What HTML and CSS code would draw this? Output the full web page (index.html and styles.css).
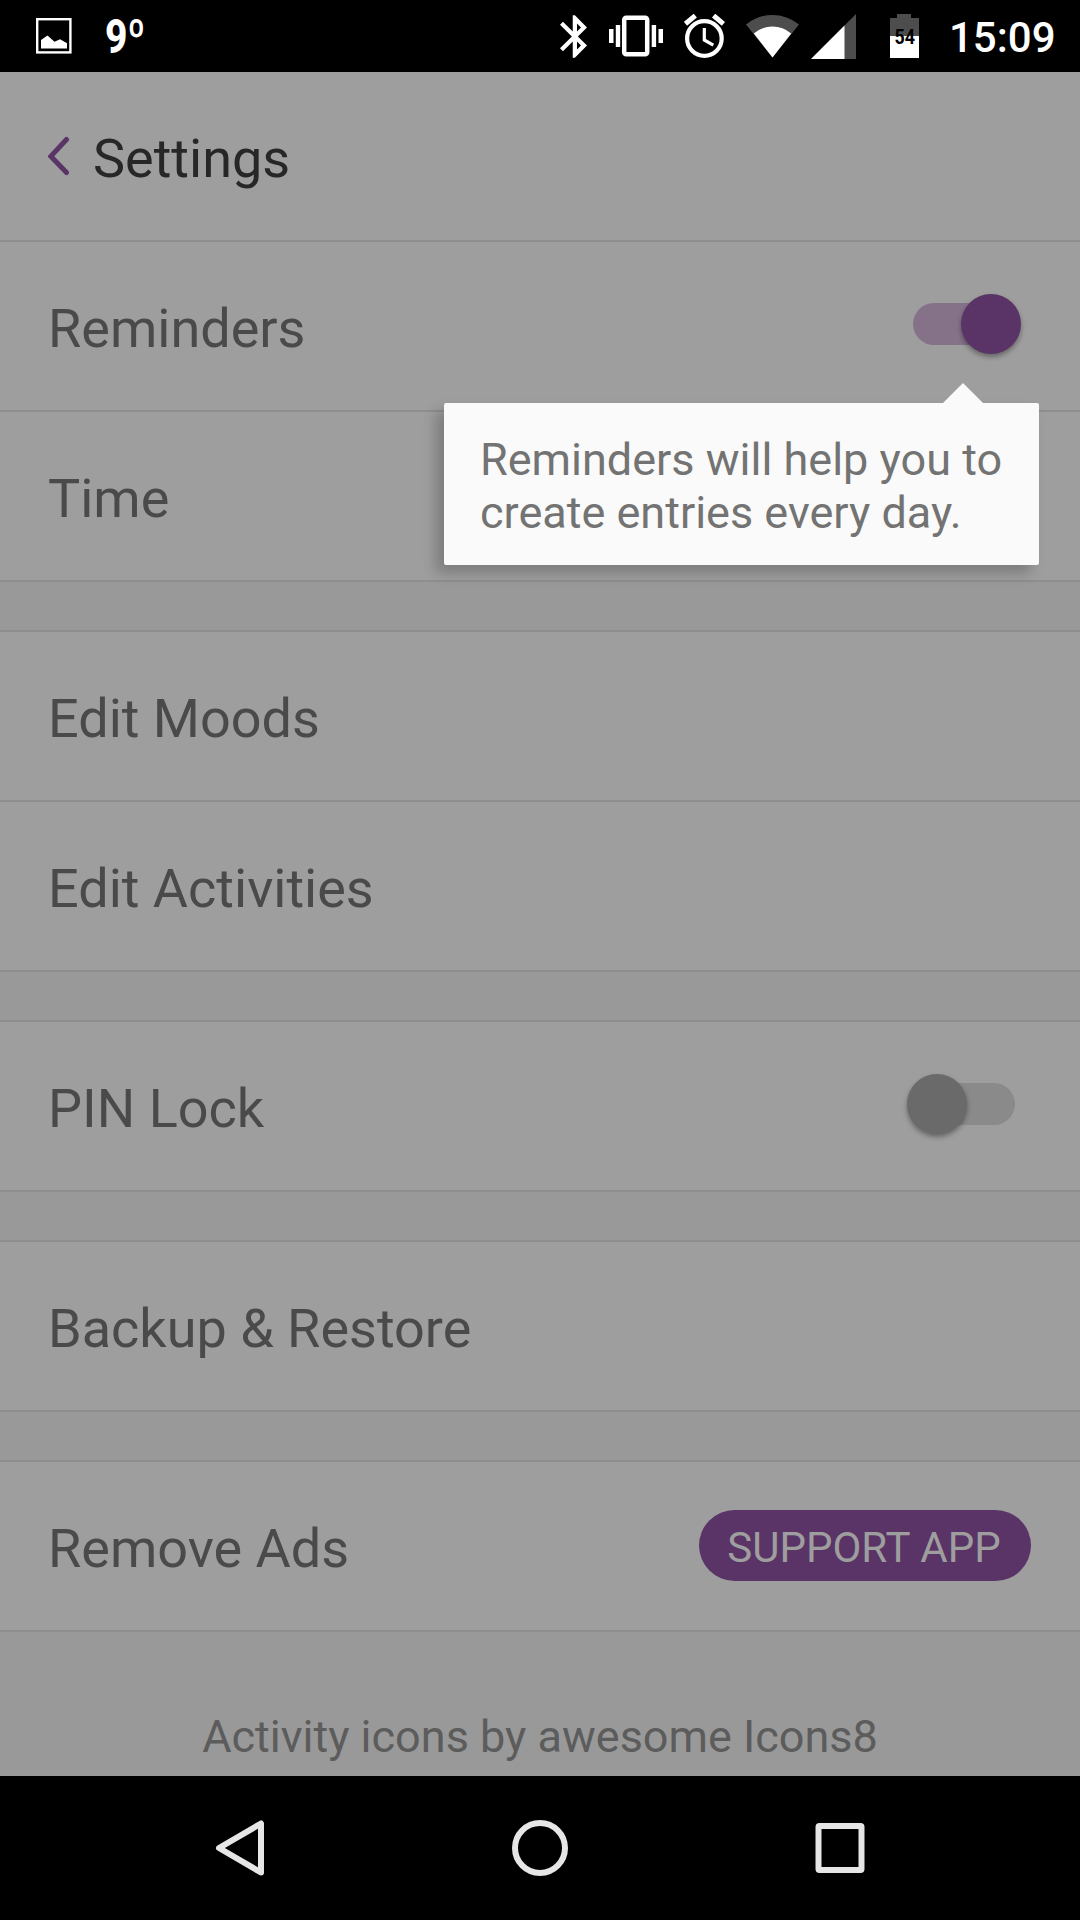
FILE: index.html
```html
<!DOCTYPE html>
<html lang="en">

<head>
    <meta charset="UTF-8">
    <meta name="viewport" content="width=device-width, initial-scale=1.0">
    <title>Settings</title>
    <link rel="stylesheet" href="styles.css">
</head>

<body>
    <div class="status-bar">
        <svg class="icon-picture" width="36" height="36" viewBox="0 0 36 36">
            <rect x="1.2" y="1.2" width="33.2" height="33.2" fill="none" stroke="#fff" stroke-width="2.4" />
            <path d="M5 30.500V22l6.500-4.500 7 6.300 5.500-2.600 7 4v5.300z" fill="#fff" />
        </svg>
        <span class="temperature">9º</span>
        <svg class="icon-bluetooth" width="27" height="43" viewBox="5 2 12.710 20">
            <path d="M17.710 7.710L12 2h-1v7.590L6.410 5 5 6.410 10.590 12 5 17.590 6.410 19 11 14.410V22h1l5.710-5.710-4.300-4.290 4.300-4.290zM13 5.830l1.880 1.880L13 9.590V5.830zm1.880 10.460L13 18.170v-3.760l1.880 1.880z" fill="#fff" />
        </svg>
        <svg class="icon-vibrate" width="54" height="42" viewBox="0 0 54 42">
            <rect x="15.200" y="2.700" width="23" height="36.500" rx="2" fill="none" stroke="#fff" stroke-width="4.500" />
            <path d="M0 14h4.500v14H0zM6.800 10h4.400v22H6.800zM42.700 10h4.400v22h-4.400zM49.500 14H54v14h-4.500z" fill="#fff" />
        </svg>
        <svg class="icon-alarm" width="42" height="44" viewBox="0 0 42 44">
            <g fill="none" stroke="#fff">
                <circle cx="20.400" cy="24.500" r="17.300" stroke-width="4.200" />
                <path d="M1.500 9.800l9.800-8.200M29.600 1.600l9.800 8.200" stroke-width="5" />
                <path d="M20.300 14v12l9 5.200" stroke-width="3.200" />
            </g>
        </svg>
        <svg class="icon-wifi" width="53" height="43" viewBox="0 0 53 43">
            <path d="M26.500 42.500L0 9.500Q12 0 26.500 0T53 9.500z" fill="#4d4d4d" />
            <path d="M26.500 42.500L7.800 18.500Q16 11.500 26.500 11.500T45.200 18.500z" fill="#fff" />
        </svg>
        <svg class="icon-signal" width="45" height="45" viewBox="0 0 45 45">
            <path d="M0 45L45 0v45z" fill="#4d4d4d" />
            <path d="M0 45L33.500 11.500V45z" fill="#fff" />
        </svg>
        <svg class="icon-battery" width="29" height="44" viewBox="0 0 29 44">
            <path d="M0 4h7V0h14v4h8v18H0z" fill="#4d4d4d" />
            <path d="M0 22h29v22H0z" fill="#fff" />
            <text class="battery-level" x="4.500" y="30" textLength="20.500" lengthAdjust="spacingAndGlyphs">54</text>
        </svg>
        <span class="clock">15:09</span>
    </div>

    <div class="settings">
        <div class="header">
            <svg class="back" width="22" height="40" viewBox="0 0 22 40">
                <path d="M18.500 3.500L2.800 20.300 18.500 36.500" fill="none" stroke="#5a3466" stroke-width="5" stroke-linecap="round" />
            </svg>
            <h1>Settings</h1>
        </div>

        <div class="group first">
            <div class="row">
                <span class="label">Reminders</span>
                <div class="switch on"><div class="knob"></div></div>
                <div class="tooltip">Reminders will help you to<br>create entries every day.</div>
            </div>
            <div class="row"><span class="label">Time</span></div>
        </div>

        <div class="group">
            <div class="row"><span class="label">Edit Moods</span></div>
            <div class="row"><span class="label">Edit Activities</span></div>
        </div>

        <div class="group">
            <div class="row">
                <span class="label">PIN Lock</span>
                <div class="switch"><div class="knob"></div></div>
            </div>
        </div>

        <div class="group">
            <div class="row"><span class="label">Backup &amp; Restore</span></div>
        </div>

        <div class="group">
            <div class="row">
                <span class="label">Remove Ads</span>
                <button class="support">SUPPORT APP</button>
            </div>
        </div>

        <div class="credits">Activity icons by awesome Icons8</div>
    </div>

    <div class="nav-bar">
        <svg width="56" height="60" viewBox="0 0 56 60">
            <path d="M49 5.500v49L7 30z" fill="none" stroke="#e6e6e6" stroke-width="6" stroke-linejoin="round" />
        </svg>
        <svg width="56" height="56" viewBox="0 0 56 56">
            <circle cx="28" cy="28" r="25" fill="none" stroke="#e6e6e6" stroke-width="6" />
        </svg>
        <svg width="56" height="56" viewBox="0 0 56 56">
            <rect x="6.500" y="6" width="43" height="44" rx="1" fill="none" stroke="#e6e6e6" stroke-width="6" />
        </svg>
    </div>
</body>

</html>
```
FILE: styles.css
```css
* {
    box-sizing: border-box;
}

body {
    margin: 0;
    width: 1080px;
    height: 1920px;
    display: flex;
    flex-direction: column;
    font-family: Roboto, "Noto Sans", sans-serif;
    background: #000;
    overflow: hidden;
}

svg {
    display: block;
    flex: none;
}

/* status bar */
.status-bar {
    height: 72px;
    display: flex;
    align-items: center;
    padding-left: 36px;
    color: #fff;
    background: #000;
}

.temperature {
    width: 50px;
    margin-left: 33px;
    padding-top: 2px;
    font-size: 48px;
    font-weight: 800;
    line-height: 72px;
    transform: scaleX(0.81);
    transform-origin: left;
}

.icon-bluetooth {
    margin-left: 405px;
}

.icon-vibrate {
    margin-left: 22px;
}

.icon-alarm {
    margin-left: 21px;
}

.icon-wifi {
    margin-left: 20px;
}

.icon-signal {
    margin-left: 12px;
}

.icon-battery {
    margin-left: 34px;
}

.battery-level {
    font-size: 21px;
    font-weight: bold;
    fill: #000;
}

.clock {
    margin-left: 30px;
    padding-top: 2px;
    font-size: 42px;
    font-weight: 500;
}

/* settings list */
.settings {
    height: 1704px;
    background: #999;
    overflow: hidden;
}

.header,
.row {
    height: 170px;
    display: flex;
    align-items: center;
    padding-left: 48px;
    background: #9e9e9e;
    border-bottom: 2px solid #8e8e8e;
}

.header h1 {
    margin: 0 0 0 23px;
    padding-top: 5px;
    font-size: 54px;
    font-weight: normal;
    color: #272727;
}

.group {
    margin-top: 48px;
    border-top: 2px solid #8e8e8e;
}

.group.first {
    margin-top: 0;
    border-top: none;
}

.row {
    position: relative;
    justify-content: space-between;
}

.label {
    padding-top: 5px;
    font-size: 54px;
    color: #4a4a4a;
}

.switch {
    width: 102px;
    height: 42px;
    margin: 0 65px 4px 0;
    display: flex;
    align-items: center;
    border-radius: 21px;
    background: #8a8a8a;
}

.switch.on {
    justify-content: flex-end;
    background: #857289;
}

.knob {
    width: 60px;
    height: 60px;
    flex: none;
    margin: 0 -6px;
    border-radius: 50%;
    background: #6a6a6a;
    box-shadow: 0 3px 5px rgba(0, 0, 0, 0.35);
}

.on .knob {
    background: #5a3466;
}

.tooltip {
    position: absolute;
    z-index: 1;
    top: 161px;
    left: 444px;
    width: 595px;
    height: 162px;
    padding: 30px 0 0 36px;
    font-size: 45px;
    line-height: 53px;
    white-space: nowrap;
    color: #737373;
    background: #fafafa;
    border-radius: 2px;
    box-shadow: -8px 8px 14px rgba(0, 0, 0, 0.22);
}

.tooltip::before {
    content: "";
    position: absolute;
    top: -20px;
    left: 499px;
    border: 20px solid transparent;
    border-top: none;
    border-bottom-color: #fafafa;
}

.support {
    width: 332px;
    height: 71px;
    margin: 0 49px 1px 0;
    padding: 3px 2px 0 0;
    border: none;
    border-radius: 36px;
    font-family: inherit;
    font-size: 42px;
    color: #9e9e9e;
    background: #5a3466;
}

.credits {
    padding-top: 78px;
    font-size: 45px;
    line-height: 53px;
    text-align: center;
    color: #5c5c5c;
}

/* navigation bar */
.nav-bar {
    height: 144px;
    display: flex;
    align-items: center;
    justify-content: space-between;
    padding: 0 212px;
    background: #000;
}
```
